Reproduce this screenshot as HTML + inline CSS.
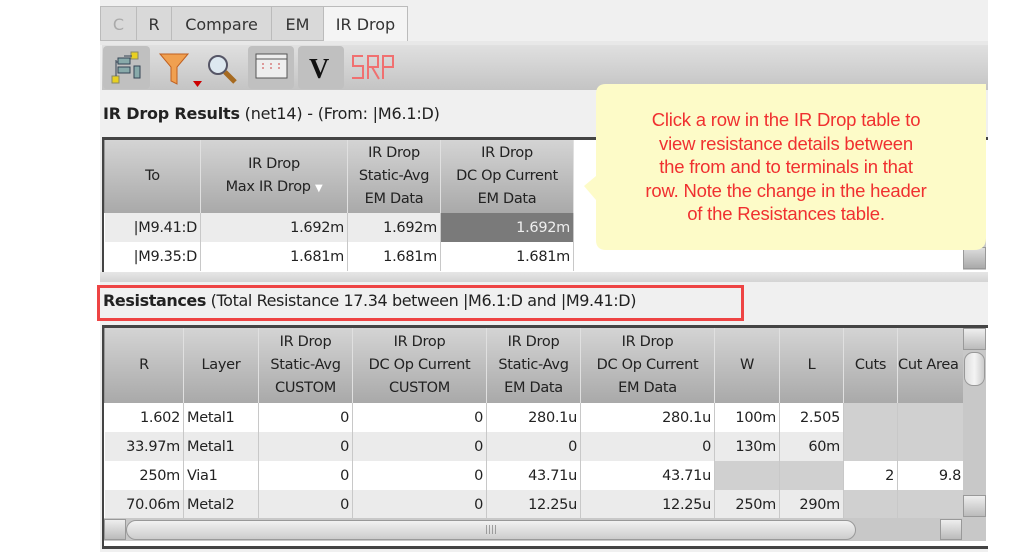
<!DOCTYPE html>
<html><head><meta charset="utf-8"><style>
*{margin:0;padding:0;box-sizing:border-box}
body{width:1013px;height:552px;background:#fff;position:relative;overflow:hidden;font-family:"DejaVu Sans","Liberation Sans",sans-serif;color:#222}
.a{position:absolute}
.panel{left:100px;top:0;width:888px;height:552px;background:#f0f0f0}
.tab{position:absolute;top:6px;height:35px;background:#d9d9d9;border:1px solid #bbb;font-size:16px;text-align:center;line-height:36px;color:#333}
table{border-collapse:collapse;table-layout:fixed;position:absolute;font-size:14.5px}
td,th{border-right:1px solid #c8c8c8;overflow:hidden;white-space:nowrap;letter-spacing:-0.3px}
th{font-weight:normal;background:linear-gradient(#d4d4d4,#a9a9a9);line-height:23px;color:#222;border-right:1px solid #e0e0e0;border-left:1px solid #999}
td{text-align:right;padding:0 3px;height:29px}
.g{background:#d0d0d0}
</style></head><body>
<div class="a panel"></div>
<div class="tab" style="left:100px;width:37px;color:#aaa">C</div>
<div class="tab" style="left:136px;width:36px">R</div>
<div class="tab" style="left:171px;width:101px">Compare</div>
<div class="tab" style="left:271px;width:53px">EM</div>
<div class="tab" style="left:323px;width:85px;background:#f4f4f4;border-bottom:none">IR Drop</div>
<div class="a" style="left:100px;top:41px;width:888px;height:4px;background:#e8e8e8"></div>
<div class="a" style="left:102px;top:45px;width:886px;height:45px;background:linear-gradient(#e0e0e0,#c4c4c4)"></div>
<div class="a" style="left:103px;top:46px;width:47px;height:43px;background:#c0c0c0;border-radius:4px"></div>
<svg class="a" style="left:108px;top:50px" width="38" height="36"><rect x="23" y="2" width="7" height="7" fill="#e8d020" stroke="#886"/><rect x="4" y="26" width="7" height="7" fill="#e8d020" stroke="#886"/><rect x="10" y="8" width="12" height="6" fill="#8aa" stroke="#345"/><rect x="10" y="17" width="12" height="6" fill="#8aa" stroke="#345"/><rect x="26" y="16" width="6" height="12" fill="#8aa" stroke="#345"/><path d="M8 10v16M24 6h-8M8 12h2" stroke="#345" fill="none"/></svg>
<svg class="a" style="left:157px;top:50px" width="46" height="40"><path d="M3 4h28l-11 13v17l-6-3V17z" fill="#f0a050" stroke="#c06020"/><path d="M36 31h9l-4.5 6z" fill="#c00"/></svg>
<svg class="a" style="left:205px;top:52px" width="34" height="34"><circle cx="13" cy="13" r="9" fill="#dde8f0" stroke="#556" stroke-width="2"/><path d="M20 20l10 10" stroke="#a66a20" stroke-width="5"/></svg>
<div class="a" style="left:248px;top:46px;width:46px;height:43px;background:#c0c0c0;border-radius:4px"></div>
<svg class="a" style="left:254px;top:52px" width="36" height="30"><rect x="2" y="2" width="31" height="24" fill="#eee" stroke="#555"/><path d="M2 7h31" stroke="#555"/><path d="M9 11v8M17 11v8M25 11v8" stroke="#c44" stroke-dasharray="2 2"/></svg>
<div class="a" style="left:298px;top:46px;width:46px;height:43px;background:#c0c0c0;border-radius:4px"></div>
<div class="a" style="left:309px;top:54px;font:bold 28px 'Liberation Serif',serif;color:#111">V</div>
<svg class="a" style="left:350px;top:52px" width="46" height="30"><g fill="none" stroke="#f07070" stroke-width="2"><path d="M13 4H3v10h10v12H2"/><path d="M18 27V4h10v11H18M22 15l7 12"/><path d="M33 27V4h10v11H33"/></g></svg>
<div class="a" style="left:103px;top:104px;font-size:16px;letter-spacing:-0.2px"><b>IR Drop Results</b> (net14) - (From: |M6.1:D)</div>
<div class="a" style="left:102px;top:137px;width:886px;height:135px;background:#fff;border-top:3px solid #444;border-left:2px solid #444"></div>
<table style="left:104px;top:140px;width:470px">
<colgroup><col style="width:96px"><col style="width:147px"><col style="width:93px"><col style="width:133px"></colgroup>
<tr style="height:73px"><th>To</th><th>IR Drop<br>Max IR Drop <span style="font-size:10px;color:#fff">▼</span></th><th>IR Drop<br>Static-Avg<br>EM Data</th><th>IR Drop<br>DC Op Current<br>EM Data</th></tr>
<tr style="background:#ececec"><td>|M9.41:D</td><td>1.692m</td><td>1.692m</td><td style="background:#7a7a7a;color:#eee">1.692m</td></tr>
<tr><td>|M9.35:D</td><td>1.681m</td><td>1.681m</td><td>1.681m</td></tr>
</table>
<div class="a" style="left:963px;top:140px;width:23px;height:130px;background:#c8c8c8"></div>
<div class="a" style="left:963px;top:247px;width:23px;height:22px;background:linear-gradient(#ddd,#aaa);border:1px solid #999"></div>
<div class="a" style="left:100px;top:272px;width:888px;height:10px;background:linear-gradient(#e6e6e6,#d4d4d4)"></div>
<svg class="a" style="left:540px;top:80px" width="450" height="176"><path d="M56 14q0-10 10-10h380v154q0 12-12 12H66q-10 0-10-10v-40l-12-14 12-10z" fill="#fdfbc8"/></svg>
<div class="a" style="left:586px;top:108px;width:400px;text-align:center;color:#f03030;font-size:18.5px;line-height:23.5px;font-family:'Liberation Sans','DejaVu Sans',sans-serif;letter-spacing:-0.2px">Click a row in the IR Drop table to<br>view resistance details between<br>the from and to terminals in that<br>row. Note the change in the header<br>of the Resistances table.</div>
<div class="a" style="left:103px;top:291px;font-size:16px;letter-spacing:-0.4px"><b>Resistances</b> (Total Resistance 17.34 between |M6.1:D and |M9.41:D)</div>
<div class="a" style="left:97px;top:285px;width:647px;height:36px;border:3px solid #ee4444"></div>
<div class="a" style="left:102px;top:325px;width:886px;height:224px;background:#fff;border-top:3px solid #444;border-left:2px solid #444;border-bottom:3px solid #444"></div>
<table style="left:104px;top:328px;width:860px">
<colgroup><col style="width:79px"><col style="width:75px"><col style="width:94px"><col style="width:134px"><col style="width:94px"><col style="width:134px"><col style="width:65px"><col style="width:64px"><col style="width:54px"><col style="width:67px"></colgroup>
<tr style="height:75px"><th>R</th><th>Layer</th><th>IR Drop<br>Static-Avg<br>CUSTOM</th><th>IR Drop<br>DC Op Current<br>CUSTOM</th><th>IR Drop<br>Static-Avg<br>EM Data</th><th>IR Drop<br>DC Op Current<br>EM Data</th><th>W</th><th>L</th><th>Cuts</th><th style="text-align:left">Cut Area</th></tr>
<tr><td>1.602</td><td style="text-align:left">Metal1</td><td>0</td><td>0</td><td>280.1u</td><td>280.1u</td><td>100m</td><td>2.505</td><td class="g"></td><td class="g"></td></tr>
<tr style="background:#ebebeb"><td>33.97m</td><td style="text-align:left">Metal1</td><td>0</td><td>0</td><td>0</td><td>0</td><td>130m</td><td>60m</td><td class="g"></td><td class="g"></td></tr>
<tr><td>250m</td><td style="text-align:left">Via1</td><td>0</td><td>0</td><td>43.71u</td><td>43.71u</td><td class="g"></td><td class="g"></td><td>2</td><td>9.8</td></tr>
<tr style="background:#ebebeb"><td>70.06m</td><td style="text-align:left">Metal2</td><td>0</td><td>0</td><td>12.25u</td><td>12.25u</td><td>250m</td><td>290m</td><td class="g"></td><td class="g"></td></tr>
</table>
<div class="a" style="left:963px;top:328px;width:23px;height:190px;background:#c8c8c8"></div>
<div class="a" style="left:963px;top:328px;width:23px;height:22px;background:linear-gradient(#eee,#bbb);border:1px solid #999"></div>
<div class="a" style="left:964px;top:352px;width:21px;height:34px;background:linear-gradient(90deg,#ddd,#f4f4f4,#ccc);border:1px solid #999;border-radius:9px"></div>
<div class="a" style="left:963px;top:495px;width:23px;height:22px;background:linear-gradient(#eee,#bbb);border:1px solid #999"></div>
<div class="a" style="left:104px;top:518px;width:882px;height:23px;background:#c8c8c8"></div>
<div class="a" style="left:104px;top:519px;width:22px;height:21px;background:linear-gradient(#eee,#bbb);border:1px solid #999"></div>
<div class="a" style="left:126px;top:520px;width:730px;height:20px;background:linear-gradient(#f2f2f2,#ccc);border:1px solid #999;border-radius:10px;text-align:center;font-size:9px;line-height:18px;color:#888">||||</div>
<div class="a" style="left:940px;top:519px;width:22px;height:21px;background:linear-gradient(#eee,#bbb);border:1px solid #999"></div>
</body></html>
